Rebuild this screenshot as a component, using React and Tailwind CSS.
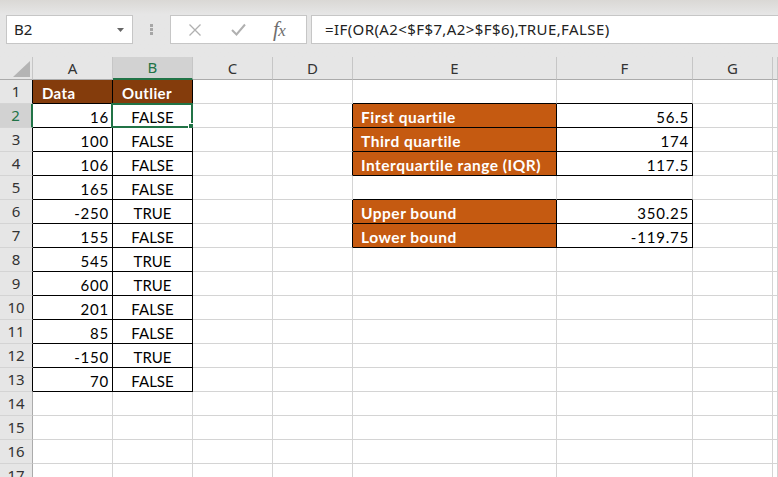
import React from 'react';

const cols = ['A', 'B', 'C', 'D', 'E', 'F', 'G', ''];
const rowCount = 17;

// cell contents: [text, kind]
const data = {
  'A1': ['Data', 'head'], 'B1': ['Outlier', 'head'],
  'A2': ['16'], 'B2': ['FALSE', 'c'],
  'A3': ['100'], 'B3': ['FALSE', 'c'],
  'A4': ['106'], 'B4': ['FALSE', 'c'],
  'A5': ['165'], 'B5': ['FALSE', 'c'],
  'A6': ['-250'], 'B6': ['TRUE', 'c'],
  'A7': ['155'], 'B7': ['FALSE', 'c'],
  'A8': ['545'], 'B8': ['TRUE', 'c'],
  'A9': ['600'], 'B9': ['TRUE', 'c'],
  'A10': ['201'], 'B10': ['FALSE', 'c'],
  'A11': ['85'], 'B11': ['FALSE', 'c'],
  'A12': ['-150'], 'B12': ['TRUE', 'c'],
  'A13': ['70'], 'B13': ['FALSE', 'c'],
  'E2': ['First quartile', 'label'], 'F2': ['56.5'],
  'E3': ['Third quartile', 'label'], 'F3': ['174'],
  'E4': ['Interquartile range (IQR)', 'label'], 'F4': ['117.5'],
  'E6': ['Upper bound', 'label'], 'F6': ['350.25'],
  'E7': ['Lower bound', 'label'], 'F7': ['-119.75'],
};

const inRange = (c, r) => {
  if (c < 0) return false;
  if ((c === 0 || c === 1) && r >= 1 && r <= 13) return true;
  if ((c === 4 || c === 5) && ((r >= 2 && r <= 4) || (r >= 6 && r <= 7))) return true;
  return false;
};

function Cell({ c, r }) {
  const key = cols[c] + r;
  const item = data[key];
  const blackR = inRange(c, r) || inRange(c + 1, r);
  const blackB = inRange(c, r) || inRange(c, r + 1);
  const selected = key === 'B2';
  let bg = 'bg-white';
  let text = 'text-black justify-end pr-[3px] tracking-[0.8px] text-[15px]';
  if (item && item[1] === 'head') {
    bg = 'bg-[#843c0c]';
    text = 'text-white font-bold justify-start pl-[9px] tracking-[0.4px] text-[15px]';
  } else if (item && item[1] === 'label') {
    bg = 'bg-[#c55a11]';
    text = 'text-white font-bold justify-start pl-[8px] tracking-[0.5px] text-[15.5px]';
  } else if (item && item[1] === 'c') {
    text = 'text-black justify-center text-[15px]';
  }
  return (
    <div
      className={`relative h-[24px] flex items-start pt-[3px] leading-[20px] whitespace-nowrap border-r border-b ${blackR ? 'border-r-black' : 'border-r-[#d4d4d4]'} ${blackB ? 'border-b-black' : 'border-b-[#d4d4d4]'} ${bg} ${text}`}
    >
      {item ? item[0] : ''}
      {selected && (
        <div className="absolute -left-[2px] -top-[1px] -right-[1px] -bottom-[1px] border-2 border-[#217346] pointer-events-none">
          <div className="absolute -right-[4px] -bottom-[4px] w-[7px] h-[7px] bg-[#217346] border border-white" />
        </div>
      )}
    </div>
  );
}

export default function App() {
  const rows = Array.from({ length: rowCount }, (_, i) => i + 1);
  return (
    <div className="w-[778px] h-[477px] overflow-hidden bg-[#e6e6e6] font-['Lato',sans-serif]">
      {/* formula bar */}
      <div className="h-[57px] bg-gradient-to-b from-[#dad8d5] via-[#e6e6e6] via-[25%] to-[#e6e6e6] flex items-start pt-[15px] pl-[6px]">
        <div className="w-[127px] h-[29px] bg-white border border-[#c6c6c6] flex items-center justify-between pl-[7px] pr-[8px] font-['Noto_Sans',sans-serif] text-[15px] text-[#222]">
          <span>B2</span>
          <svg width="7" height="4" viewBox="0 0 7 4"><path d="M0 0h7L3.5 4z" fill="#666" /></svg>
        </div>
        <div className="w-[37px] h-[29px] flex flex-col items-center justify-center gap-[1px]">
          <div className="w-[3px] h-[3px] bg-[#a6a6a6]" />
          <div className="w-[3px] h-[3px] bg-[#a6a6a6]" />
          <div className="w-[3px] h-[3px] bg-[#a6a6a6]" />
        </div>
        <div className="w-[137px] h-[29px] bg-white border border-[#c6c6c6] flex items-center pl-[17px]">
          <svg width="14" height="14" viewBox="0 0 14 14"><path d="M1.5 1.5l11 11M12.5 1.5l-11 11" stroke="#b0b0b0" strokeWidth="1.3" /></svg>
          <svg className="ml-[29px]" width="15" height="13" viewBox="0 0 15 13"><path d="M1 7l4.5 4.5L14 1.5" stroke="#b0b0b0" strokeWidth="2" fill="none" /></svg>
          <span className="ml-[27px] font-['Liberation_Serif',serif] italic text-[21px] text-[#6e6e6e] leading-none tracking-[-0.5px]">
            f<span className="text-[17px]">x</span>
          </span>
        </div>
        <div className="ml-[4px] flex-1 h-[29px] bg-white border border-[#c6c6c6] border-r-0 flex items-center pl-[13px] font-['Noto_Sans',sans-serif] text-[15px] tracking-[0.4px] text-[#222] whitespace-nowrap">
          =IF(OR(A2&lt;$F$7,A2&gt;$F$6),TRUE,FALSE)
        </div>
      </div>

      {/* sheet grid */}
      <div className="grid grid-cols-[33px_80px_80px_80px_80px_204px_136px_80px_1fr] grid-rows-[23px] auto-rows-[24px]">
        {/* corner */}
        <div className="bg-[#e6e6e6] border-r border-b border-r-[#c6c6c6] border-b-[#ababab] flex items-end justify-end pr-[2px] pb-[2px]">
          <svg width="17" height="16" viewBox="0 0 17 16"><path d="M17 0V16H0z" fill="#b4b4b4" /></svg>
        </div>
        {cols.map((c, i) => (
          <div
            key={'h' + i}
            className={`flex items-center justify-center text-[15px] font-['Noto_Sans',sans-serif] border-r border-r-[#c6c6c6] ${c === 'B' ? 'bg-[#d2d2d2] text-[#217346] border-b-2 border-b-[#217346]' : 'bg-[#e6e6e6] text-[#333] border-b border-b-[#ababab]'}`}
          >
            {c}
          </div>
        ))}
        {rows.map((r) => (
          <React.Fragment key={r}>
            <div
              className={`flex items-center justify-center text-[15px] font-['Noto_Sans',sans-serif] border-b border-b-[#d4d4d4] ${r === 2 ? 'bg-[#d2d2d2] text-[#217346] border-r-2 border-r-[#217346]' : 'bg-[#e6e6e6] text-[#333] border-r ' + (r <= 13 ? 'border-r-black' : 'border-r-[#ababab]')}`}
            >
              {r}
            </div>
            {cols.map((_, c) => (
              <Cell key={c} c={c} r={r} />
            ))}
          </React.Fragment>
        ))}
      </div>
    </div>
  );
}
